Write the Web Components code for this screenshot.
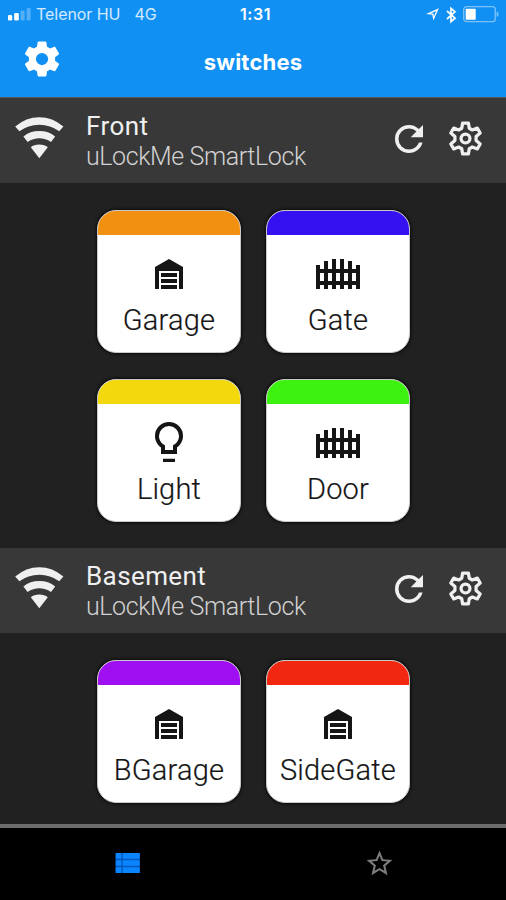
<!DOCTYPE html>
<html lang="en">
<head>
<meta charset="utf-8">
<title>switches</title>
<style>
  body {
    margin: 0;
    background: #000;
  }
</style>
</head>
<body>
<switches-app></switches-app>

<script>
const ICONS = {
  cog: `<path d="M12,15.5A3.5,3.5 0 0,1 8.5,12A3.5,3.5 0 0,1 12,8.5A3.5,3.5 0 0,1 15.5,12A3.5,3.5 0 0,1 12,15.5M19.43,12.97C19.47,12.65 19.5,12.33 19.5,12C19.5,11.67 19.47,11.34 19.43,11L21.54,9.37C21.73,9.22 21.78,8.95 21.66,8.73L19.66,5.27C19.54,5.05 19.27,4.96 19.05,5.05L16.56,6.05C16.04,5.66 15.5,5.32 14.87,5.07L14.5,2.42C14.46,2.18 14.25,2 14,2H10C9.75,2 9.54,2.18 9.5,2.42L9.13,5.07C8.5,5.32 7.96,5.66 7.44,6.05L4.95,5.05C4.73,4.96 4.46,5.05 4.34,5.27L2.34,8.73C2.21,8.95 2.27,9.22 2.46,9.37L4.57,11C4.53,11.34 4.5,11.67 4.5,12C4.5,12.33 4.53,12.65 4.57,12.97L2.46,14.63C2.27,14.78 2.21,15.05 2.34,15.27L4.34,18.73C4.46,18.95 4.73,19.03 4.95,18.95L7.44,17.94C7.96,18.34 8.5,18.68 9.13,18.93L9.5,21.58C9.54,21.82 9.75,22 10,22H14C14.25,22 14.46,21.82 14.5,21.58L14.87,18.93C15.5,18.67 16.04,18.34 16.56,17.94L19.05,18.95C19.27,19.03 19.54,18.95 19.66,18.73L21.66,15.27C21.78,15.05 21.73,14.78 21.54,14.63L19.43,12.97Z"/>`,
  cogOutline: `<g fill="none" stroke="currentColor" stroke-width="1.9" stroke-linejoin="round"><path d="M10.3,3H13.7L14.2,6L16,7L18.9,5.9L20.6,8.8L18.2,10.8V13.2L20.6,15.2L18.9,18.1L16,17L14.2,18L13.7,21H10.3L9.8,18L8,17L5.1,18.1L3.4,15.2L5.8,13.2V10.8L3.4,8.8L5.1,5.9L8,7L9.8,6Z"/><circle cx="12" cy="12" r="2.6"/></g>`,
  refresh: `<path d="M17.65,6.35C16.2,4.9 14.21,4 12,4A8,8 0 0,0 4,12A8,8 0 0,0 12,20C15.73,20 18.84,17.45 19.73,14H17.65C16.83,16.33 14.61,18 12,18A6,6 0 0,1 6,12A6,6 0 0,1 12,6C13.66,6 15.14,6.69 16.22,7.78L13,11H20V4L17.65,6.35Z"/>`,
  wifi: `<path d="M.2,10.5Q11,1.2 24.3,1.2T48.4,10.5L44.2,15.2Q35.5,8.7 24.3,8.7T4.4,15.2Z"/><path d="M8.4,20.4Q15,15 24.3,15T40.2,20.4L36,26Q30.5,22.3 24.3,22.3T12.6,26Z"/><path d="M15.8,31.2Q19,28.4 24.3,28.4T32.8,31.2L24.3,42.2Z"/>`,
  garage: `<path d="M19,20H17V11H7V20H5V9L12,5L19,9V20M8,12H16V14H8V12M8,15H16V17H8V15M16,18V20H8V18H16Z"/>`,
  gate: `<path d="M9 5V10H7V6H5V10H3V8H1V20H3V18H5V20H7V18H9V20H11V18H13V20H15V18H17V20H19V18H21V20H23V8H21V10H19V6H17V10H15V5H13V10H11V5H9M3 12H5V16H3V12M7 12H9V16H7V12M11 12H13V16H11V12M15 12H17V16H15V12M19 12H21V16H19V12Z"/>`,
  bulb: `<path d="M12,2A7,7 0 0,1 19,9C19,11.38 17.81,13.47 16,14.74V18H8V14.74C6.19,13.47 5,11.38 5,9A7,7 0 0,1 12,2M9,20.4H15V22H9V20.4M12,4A5,5 0 0,0 7,9C7,11.05 8.23,12.81 10,13.58V16H14V13.58C15.77,12.81 17,11.05 17,9A5,5 0 0,0 12,4Z"/>`,
  list: `<path fill="#0058ba" d="M4,5H21V19H4Z"/><path d="M9,5V9H21V5M9,19H21V15H9M9,14H21V10H9M4,9H8V5H4M4,19H8V15H4M4,14H8V10H4V14Z"/>`,
  star: `<path d="M12,15.39L8.24,17.66L9.23,13.38L5.91,10.5L10.29,10.13L12,6.09L13.71,10.13L18.09,10.5L14.77,13.38L15.76,17.66M22,9.24L14.81,8.63L12,2L9.19,8.63L2,9.24L7.45,13.97L5.82,21L12,17.27L18.18,21L16.54,13.97L22,9.24Z"/>`,
  signal: `<rect x="0" y="7" width="4.2" height="5.5" rx="1.3"/><rect x="6.2" y="5" width="4.6" height="7.5" rx="1.3"/><rect x="12.6" y="2.5" width="4" height="10" rx="1" opacity=".28"/><rect x="18.6" y="0" width="4" height="12.5" rx="1" opacity=".28"/>`,
  location: `<path d="M0,5.9L12.8,.2L7.4,12.6L6.3,6.7ZM4.6,5.4L7.5,5.6L7.9,8.6L10.2,2.9Z" fill-rule="evenodd"/>`,
  bluetooth: `<path fill="none" stroke="currentColor" stroke-width="1.7" d="M1,4L9,11.2L5,14.6V1.4L9,4.8L1,12"/>`,
  battery: `<rect x=".7" y=".7" width="31.6" height="15" rx="3" fill="none" stroke="currentColor" stroke-width="1.3" opacity=".45"/><rect x="2.7" y="2.7" width="10" height="11" rx=".8"/><path opacity=".45" d="M33.6,5.4Q35.6,6 35.6,8.2T33.6,11Z"/>`,
};

class AppIcon extends HTMLElement {
  constructor() {
    super();
    this.attachShadow({ mode: "open" });
  }

  connectedCallback() {
    const width = this.getAttribute("width");
    const height = this.getAttribute("height") || width;
    const box = this.getAttribute("box") || "0 0 24 24";
    this.shadowRoot.innerHTML = `
      <style>
        :host { display: block; flex: none; }
        svg { display: block; fill: currentColor; overflow: visible; }
      </style>
      <svg width="${width}" height="${height}" viewBox="${box}">${ICONS[this.getAttribute("name")]}</svg>
    `;
  }
}
customElements.define("app-icon", AppIcon);

class StatusBar extends HTMLElement {
  constructor() {
    super();
    this.attachShadow({ mode: "open" });
    this.shadowRoot.innerHTML = `
      <style>
        :host {
          display: grid;
          grid-template-columns: 1fr auto 1fr;
          align-items: center;
          height: 29px;
          padding: 0 7px 0 8px;
          font: 16px/29px Inter, sans-serif;
          color: #fff;
        }
        .left, .right { display: flex; align-items: center; }
        .left { color: #d3eafe; }
        .left app-icon { color: #fff; }
        .carrier { margin-left: 5px; letter-spacing: -0.05px; }
        .network { margin-left: 14px; letter-spacing: -0.1px; }
        .time { font-weight: 600; letter-spacing: 0.6px; margin-left: 4px; }
        .right { justify-content: flex-end; }
        .right app-icon + app-icon { margin-left: 7px; }
      </style>
      <div class="left">
        <app-icon name="signal" width="23" height="13" box="0 0 23 13"></app-icon>
        <span class="carrier">Telenor HU</span>
        <span class="network">4G</span>
      </div>
      <div class="time">1:31</div>
      <div class="right">
        <app-icon name="location" width="13" height="13" box="0 0 13 13"></app-icon>
        <app-icon name="bluetooth" width="10" height="16" box="0 0 10 16"></app-icon>
        <app-icon name="battery" width="36" height="17" box="0 0 36 17"></app-icon>
      </div>
    `;
  }
}
customElements.define("status-bar", StatusBar);

class NavHeader extends HTMLElement {
  constructor() {
    super();
    this.attachShadow({ mode: "open" });
    this.shadowRoot.innerHTML = `
      <style>
        :host {
          display: block;
          box-sizing: border-box;
          height: 98px;
          background: #1190f4;
          border-bottom: 1px solid #5c5654;
          color: #fff;
        }
        .bar {
          display: grid;
          grid-template-columns: 63px 1fr 63px;
          padding-left: 21px;
          padding-right: 21px;
        }
        app-icon { margin-top: 9px; }
        h1 {
          margin: 14px 0 0;
          text-align: center;
          font: 700 22px/38px Inter, sans-serif;
          letter-spacing: 0.2px;
        }
      </style>
      <status-bar></status-bar>
      <div class="bar">
        <app-icon name="cog" width="42"></app-icon>
        <h1><slot></slot></h1>
      </div>
    `;
  }
}
customElements.define("nav-header", NavHeader);

class SwitchCard extends HTMLElement {
  constructor() {
    super();
    this.attachShadow({ mode: "open" });
  }

  connectedCallback() {
    this.shadowRoot.innerHTML = `
      <style>
        :host {
          display: flex;
          flex-direction: column;
          align-items: center;
          box-sizing: border-box;
          width: 144px;
          height: 143px;
          border: 1px solid #c8c8c8;
          border-radius: 19px;
          overflow: hidden;
          background: #fff;
          color: #151515;
          box-shadow: 0 0 3px 1px #0c0c0c;
        }
        .stripe {
          width: 100%;
          height: 24px;
          background: ${this.getAttribute("color")};
        }
        app-icon { margin-top: 14px; }
        .label {
          margin-top: 6px;
          font: 300 29px/34px Roboto, sans-serif;
          letter-spacing: 0.2px;
          white-space: nowrap;
          -webkit-text-stroke: 0.2px;
        }
      </style>
      <div class="stripe"></div>
      <app-icon name="${this.getAttribute("icon")}" width="48"></app-icon>
      <div class="label"><slot></slot></div>
    `;
  }
}
customElements.define("switch-card", SwitchCard);

class DeviceSection extends HTMLElement {
  constructor() {
    super();
    this.attachShadow({ mode: "open" });
    this.shadowRoot.innerHTML = `
      <style>
        :host { display: block; background: #212121; }
        header {
          display: flex;
          box-sizing: border-box;
          height: 85px;
          padding: 0 20px 0 15px;
          background: #383838;
          color: #f0f0f0;
        }
        .wifi { margin-top: 18px; }
        .names {
          flex: 1;
          padding: 13px 0 0 22px;
          font-family: Roboto, sans-serif;
        }
        .name { font-size: 26px; line-height: 31px; letter-spacing: 0.4px; }
        .model {
          font-size: 25px;
          line-height: 30px;
          font-weight: 300;
          letter-spacing: -0.4px;
          color: #d2d2d2;
        }
        .refresh { margin: 20px 15px 0 0; }
        .settings { margin-top: 20px; }
        .cards {
          display: grid;
          grid-template-columns: 144px 144px;
          justify-content: center;
          gap: 26px 25px;
          padding: 27px 0 26px 1px;
        }
      </style>
      <header>
        <app-icon class="wifi" name="wifi" width="49" height="43" box="0 0 49 43"></app-icon>
        <div class="names">
          <div class="name"><slot name="name"></slot></div>
          <div class="model"><slot name="model"></slot></div>
        </div>
        <app-icon class="refresh" name="refresh" width="42"></app-icon>
        <app-icon class="settings" name="cogOutline" width="41"></app-icon>
      </header>
      <div class="cards"><slot></slot></div>
    `;
  }
}
customElements.define("device-section", DeviceSection);

class TabBar extends HTMLElement {
  constructor() {
    super();
    this.attachShadow({ mode: "open" });
    this.shadowRoot.innerHTML = `
      <style>
        :host {
          display: grid;
          grid-template-columns: 1fr 1fr;
          justify-items: center;
          box-sizing: border-box;
          height: 76px;
          border-top: 4px solid #6d6b6c;
          background: #000;
        }
        .list { color: #0a84ff; margin-top: 18px; }
        .star { color: #7d7d7d; margin-top: 20px; }
      </style>
      <app-icon class="list" name="list" width="34"></app-icon>
      <app-icon class="star" name="star" width="31"></app-icon>
    `;
  }
}
customElements.define("tab-bar", TabBar);

class SwitchesApp extends HTMLElement {
  constructor() {
    super();
    this.attachShadow({ mode: "open" });
    this.shadowRoot.innerHTML = `
      <style>
        :host {
          display: flex;
          flex-direction: column;
          width: 506px;
          height: 900px;
          overflow: hidden;
        }
        main {
          flex: 1;
          min-height: 0;
          overflow: hidden;
          background: #212121;
        }
      </style>
      <nav-header>switches</nav-header>
      <main>
        <device-section>
          <span slot="name">Front</span>
          <span slot="model">uLockMe SmartLock</span>
          <switch-card color="#f29111" icon="garage">Garage</switch-card>
          <switch-card color="#3511f2" icon="gate">Gate</switch-card>
          <switch-card color="#f2d80c" icon="bulb">Light</switch-card>
          <switch-card color="#3df20f" icon="gate">Door</switch-card>
        </device-section>
        <device-section>
          <span slot="name">Basement</span>
          <span slot="model">uLockMe SmartLock</span>
          <switch-card color="#a00ff2" icon="garage">BGarage</switch-card>
          <switch-card color="#f22711" icon="garage">SideGate</switch-card>
        </device-section>
      </main>
      <tab-bar></tab-bar>
    `;
  }
}
customElements.define("switches-app", SwitchesApp);
</script>
</body>
</html>
